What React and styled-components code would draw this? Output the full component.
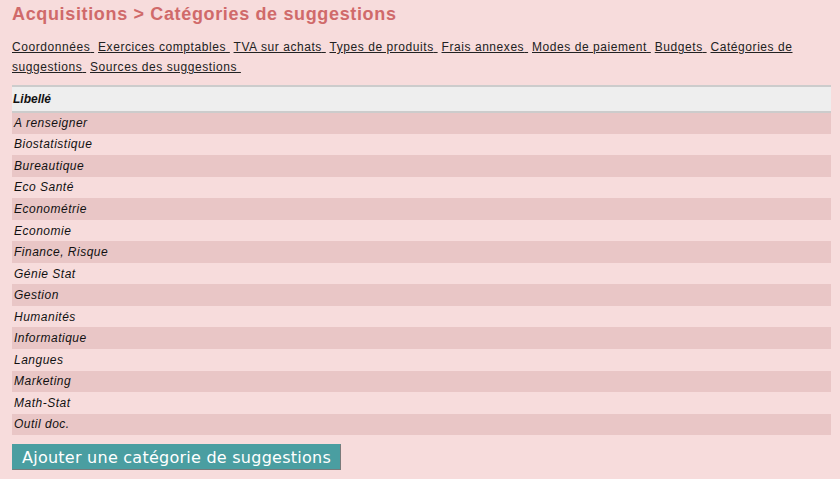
import React from 'react'
import styled, { createGlobalStyle } from 'styled-components'

const GlobalStyle = createGlobalStyle`
  html, body {
    margin: 0;
    padding: 0;
    background: #f7dcdc;
  }
  body {
    font-family: "Liberation Sans", Arial, sans-serif;
    letter-spacing: 0.5px;
    color: #111;
  }
`

const Page = styled.div`
  padding: 3px 9px 0 12px;
`

const Title = styled.h1`
  margin: 0;
  font-size: 18px;
  font-weight: bold;
  color: #d06a6a;
  letter-spacing: 0.65px;
  line-height: 22px;
`

const Menu = styled.div`
  margin-top: 12px;
  font-size: 12px;
  line-height: 20px;
  letter-spacing: 0.56px;
  width: 790px;
`

const MenuLink = styled.a`
  color: #222;
  text-decoration: underline;
  cursor: pointer;
`

const Table = styled.table`
  margin-top: 8px;
  width: 819px;
  border-collapse: collapse;
  font-size: 12px;
`

const HeadCell = styled.th`
  text-align: left;
  font-style: italic;
  font-weight: bold;
  background: #eeeeee;
  border-top: 2px solid #cccccc;
  border-bottom: 2px solid #cccccc;
  height: 24px;
  padding: 0 1px;
  letter-spacing: 0;
`

const Row = styled.tr`
  background: ${p => (p.$odd ? '#e9c6c6' : 'transparent')};
`

const Cell = styled.td`
  font-style: italic;
  height: 21.55px;
  padding: 0 2px;
  box-sizing: border-box;
`

const AddButton = styled.button`
  margin-top: 9px;
  background: #4a9ea1;
  color: #fff;
  font-family: "DejaVu Sans", Verdana, sans-serif;
  font-size: 16px;
  letter-spacing: 0.25px;
  height: 26px;
  padding: 0 9px;
  border: 1px solid;
  border-color: #4a9ea1 #7a7a7a #7a7a7a #4a9ea1;
  cursor: pointer;
`

const links = [
  'Coordonnées',
  'Exercices comptables',
  'TVA sur achats',
  'Types de produits',
  'Frais annexes',
  'Modes de paiement',
  'Budgets',
  'Catégories de suggestions',
  'Sources des suggestions',
]

const categories = [
  'A renseigner',
  'Biostatistique',
  'Bureautique',
  'Eco Santé',
  'Econométrie',
  'Economie',
  'Finance, Risque',
  'Génie Stat',
  'Gestion',
  'Humanités',
  'Informatique',
  'Langues',
  'Marketing',
  'Math-Stat',
  'Outil doc.',
]

export default function App() {
  return (
    <>
      <GlobalStyle />
      <Page>
        <Title>Acquisitions &gt; Catégories de suggestions</Title>
        <Menu>
          {links.map(l => (
            <React.Fragment key={l}>
              <MenuLink>{l}&nbsp;</MenuLink>{' '}
            </React.Fragment>
          ))}
        </Menu>
        <Table>
          <thead>
            <tr>
              <HeadCell>Libellé</HeadCell>
            </tr>
          </thead>
          <tbody>
            {categories.map((c, i) => (
              <Row key={c} $odd={i % 2 === 0}>
                <Cell>{c}</Cell>
              </Row>
            ))}
          </tbody>
        </Table>
        <AddButton>Ajouter une catégorie de suggestions</AddButton>
      </Page>
    </>
  )
}
